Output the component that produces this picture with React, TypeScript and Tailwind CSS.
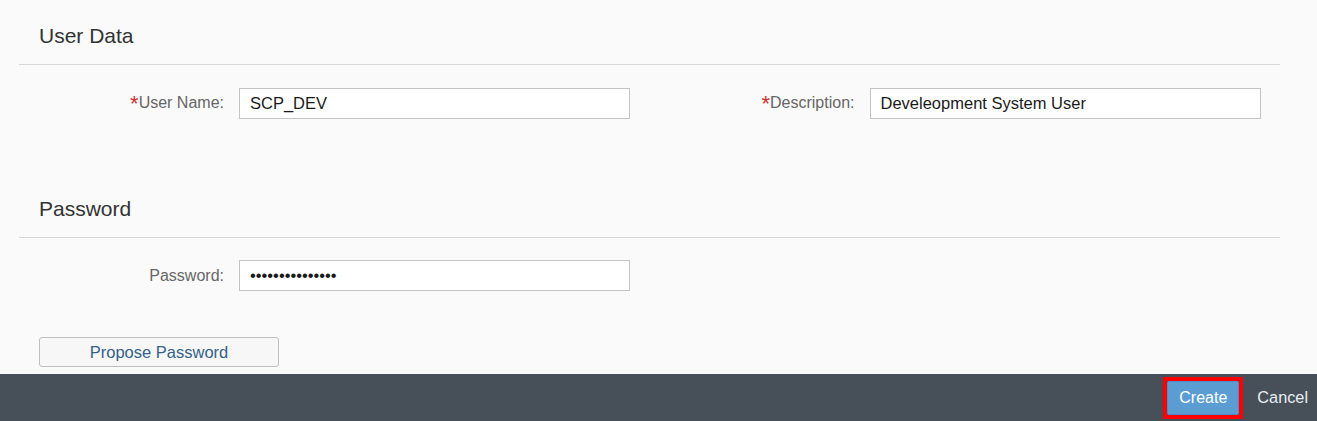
import React from "react";

const font = { fontFamily: '"Liberation Sans", Arial, sans-serif' };

const Field: React.FC<{
  label: string;
  required?: boolean;
  value: string;
  type?: string;
}> = ({ label, required, value, type = "text" }) => (
  <div className="flex items-center">
    <label className="w-[205px] shrink-0 text-right text-[16px] leading-none text-[#666666]">
      {required && (
        <span className="text-[22px] leading-none text-[#d0302f] align-[-3px]">*</span>
      )}
      {label}
    </label>
    <input
      type={type}
      readOnly
      value={value}
      className="ml-[15px] w-[391px] h-[31px] border border-[#c4c4c4] bg-white px-[10px] text-[16.5px] text-[#1a1a1a] outline-none"
      style={font}
    />
  </div>
);

const SectionTitle: React.FC<{ title: string }> = ({ title }) => (
  <div className="border-b border-[#d6d6d6] pl-[20px] pb-[16px]">
    <h2 className="text-[21px] leading-[24px] text-[#333333]">{title}</h2>
  </div>
);

export default function App() {
  return (
    <div className="w-[1317px] h-[421px] flex flex-col bg-[#fafafa] overflow-hidden" style={font}>
      <div className="flex-1 pl-[19px] pr-[37px]">
        <div className="pt-[24px]">
          <SectionTitle title="User Data" />
        </div>
        <div className="grid grid-cols-2 mt-[23px]">
          <Field label="User Name:" required value="SCP_DEV" />
          <Field label="Description:" required value="Develeopment System User" />
        </div>

        <div className="mt-[78px]">
          <SectionTitle title="Password" />
        </div>
        <div className="mt-[22px]">
          <Field label="Password:" type="password" value="•••••••••••••••" />
        </div>

        <button className="mt-[46px] ml-[20px] w-[240px] h-[30px] rounded-[3px] border border-[#bfbfbf] bg-[#f7f7f7] text-[16.5px] text-[#346187]">
          Propose Password
        </button>
      </div>

      <footer className="h-[47px] shrink-0 bg-[#474f59] flex items-center justify-end pr-[9px]">
        <div className="border-[4px] border-[#ff0000] mr-[14px]">
          <button className="w-[72px] h-[34px] border border-[#4f8cc0] bg-[#5b9dd3] text-[16px] text-white rounded-[2px]">
            Create
          </button>
        </div>
        <button className="text-[16.3px] text-[#e8eef3]">Cancel</button>
      </footer>
    </div>
  );
}
